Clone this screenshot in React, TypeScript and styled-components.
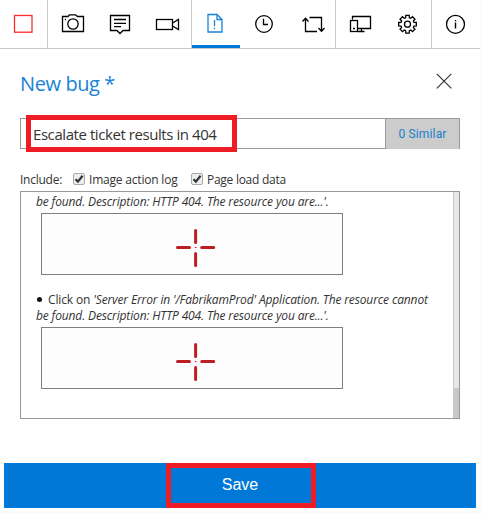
import React from 'react';
import styled, { createGlobalStyle } from 'styled-components';

const GlobalStyle = createGlobalStyle`
  *, *::before, *::after { box-sizing: border-box; }
  body { margin: 0; background: #fafafa; font-family: 'Open Sans', 'Noto Sans', sans-serif; color: #333; }
`;

const Panel = styled.main`
  display: flex;
  flex-direction: column;
  width: 480px;
  height: 511px;
  background: #fff;
`;

const Toolbar = styled.nav`
  display: flex;
  height: 49px;
  border-bottom: 1px solid #c8c8c8;
`;

const Tool = styled.button<{ $divided?: boolean; $active?: boolean }>`
  width: 48px;
  height: 48px;
  padding: 0;
  border: 0;
  background: ${p => (p.$active ? 'linear-gradient(#0078d7, #0078d7) 0 45px / 48px 3px no-repeat' : 'none')};
  box-shadow: ${p => (p.$divided ? 'inset -1px 0 #c8c8c8' : 'none')};
  svg { display: block; }
`;

const Header = styled.header`
  display: flex;
  justify-content: space-between;
  height: 69px;
  padding: 21px 26px 0 20px;
`;

const Title = styled.h1`
  margin: 0;
  font-size: 20px;
  font-weight: 400;
  line-height: 28px;
  letter-spacing: -0.4px;
  color: #1883d7;
`;

const Close = styled.button`
  width: 20px;
  height: 20px;
  margin-top: 1px;
  padding: 0;
  border: 0;
  background: none;
  svg { display: block; }
`;

const TitleField = styled.div`
  position: relative;
  display: flex;
  width: 440px;
  height: 31px;
  margin-left: 20px;
  border: 1px solid #999;
`;

const FieldText = styled.div`
  flex: 1;
  padding-left: 12px;
  font-size: 15px;
  line-height: 30px;
  letter-spacing: -0.43px;
`;

const Similar = styled.button`
  width: 74px;
  height: 30px;
  padding: 0;
  border: 0;
  border-left: 1px solid #999;
  background: #ccc;
  color: #1480cd;
  font: 12px/28px Roboto, sans-serif;
  letter-spacing: 0.15px;
`;

const Highlight = styled.div<{ $x: number; $y: number; $w: number; $h: number }>`
  position: absolute;
  left: ${p => p.$x}px;
  top: ${p => p.$y}px;
  width: ${p => p.$w}px;
  height: ${p => p.$h}px;
  border: 5px solid #ee1c25;
  pointer-events: none;
`;

const Options = styled.div`
  display: flex;
  height: 42px;
  padding: 22px 0 0 20px;
  font-size: 12px;
  line-height: 18px;
`;

const OptionsLabel = styled.span`
  width: 53px;
  letter-spacing: -0.25px;
`;

const Option = styled.label<{ $w: number; $spacing: number }>`
  display: flex;
  width: ${p => p.$w}px;
  gap: 4px;
  letter-spacing: ${p => p.$spacing}px;
  white-space: nowrap;
  svg { flex: none; margin-top: 2px; }
`;

const Log = styled.section`
  display: flex;
  width: 440px;
  height: 228px;
  margin-left: 20px;
  border: 1px solid #999;
`;

const Entries = styled.div`
  flex: 1;
  padding: 2px 0 0 15px;
  font-size: 12px;
  line-height: 16px;
  white-space: nowrap;
`;

const Line = styled.div<{ $spacing: number }>`
  height: 16px;
  letter-spacing: ${p => p.$spacing}px;
`;

const Bullet = styled.span`
  display: inline-block;
  width: 5px;
  height: 5px;
  margin: 0 6px 2px 1px;
  border-radius: 50%;
  background: #111;
`;

const Shot = styled.div`
  width: 302px;
  height: 62px;
  margin: 3px 0 17px 5px;
  border: 1px solid #808080;
  background: #fdfdfd;
  svg { display: block; }
`;

const ScrollTrack = styled.div`
  display: flex;
  align-items: flex-end;
  width: 6px;
  background: linear-gradient(90deg, #c8c8c8 1px, #e8e8e8 1px);
`;

const ScrollThumb = styled.div`
  width: 6px;
  height: 30px;
  background: #c8c8c8;
`;

const SaveButton = styled.button`
  position: relative;
  width: 472px;
  height: 45px;
  margin: 44px 0 0 4px;
  padding: 0 0 2px;
  border: 0;
  background: #0078d7;
  color: #fff;
  font: 16px/43px 'Liberation Sans', Arial, sans-serif;
`;

const gearPath = Array.from({ length: 8 }, (_, i) => {
  const point = (radius: number, degrees: number) => {
    const angle = ((i * 45 + degrees) * Math.PI) / 180;
    return `${(23.5 + radius * Math.cos(angle)).toFixed(2)} ${(24.2 + radius * Math.sin(angle)).toFixed(2)}`;
  };
  return `${i ? 'L' : 'M'}${point(9, -11)}L${point(9, 11)}L${point(6.7, 16)}L${point(6.7, 29)}`;
}).join('') + 'Z';

type ToolItem = { name: string; color?: string; divided?: boolean; active?: boolean; art: React.ReactNode };

const tools: ToolItem[] = [
  { name: 'Stop', color: '#ff2a2a', divided: true, art: <rect x="14.5" y="15.5" width="17.5" height="16.7" /> },
  {
    name: 'Screenshot',
    art: <><path d="M14.5 16.5H20L21.5 14.8H27.5L29.5 16.5H35.5V31.5H14.5Z" /><circle cx="25" cy="24" r="5.2" /><path d="M17 19.5h1" /></>,
  },
  {
    name: 'Note',
    art: <><path d="M14.5 15.5H33.5V30.5H27L24 33.5L21 30.5H14.5Z" /><path d="M18 19.5H30M18 23.3H30M18 26.7H25" /></>,
  },
  { name: 'Record', divided: true, art: <><rect x="12.5" y="19.5" width="16" height="10" /><path d="M28.5 23L34.5 19.5V29.5L28.5 26" /></> },
  {
    name: 'Bug', color: '#1683da', active: true,
    art: <><path d="M16 14.5H25L30 19.5V32H16Z" /><path d="M25 14.5V19.5H30" /><path d="M22.5 20v6.2M22.5 27.8v1.5" /></>,
  },
  { name: 'Timeline', art: <><circle cx="24" cy="24" r="8.3" /><path d="M23.5 18.8V24.5H28" /></> },
  { name: 'Test', divided: true, art: <><path d="M29 31.5H17.5V18.5M14.5 21.5L17.5 18.3L20.5 21.5M21.5 17.5H33.5V30.5M30.5 28L33.5 31.2L36.5 28" /></> },
  {
    name: 'Devices',
    art: <><path d="M16.5 19.5V16.5H34.5V28.5H22" /><rect x="14.5" y="20.5" width="7" height="11" /><path d="M17 28.5h2M22 31.5H28.5M25.5 28.5V31.5" /></>,
  },
  { name: 'Settings', divided: true, art: <><path d={gearPath} /><circle cx="23.5" cy="24.2" r="3" /></> },
  { name: 'About', art: <><circle cx="23.5" cy="24.3" r="9" /><path d="M23.5 22.5V28.5M23.5 20v1.2" strokeWidth="1.4" /></> },
];

const Check = () => (
  <svg width="12" height="12" viewBox="0 0 12 12">
    <rect x=".5" y=".5" width="11" height="11" rx="1.5" fill="#eee" stroke="#aaa" />
    <path d="M2.5 6.2L4.9 8.6L9.6 2.8" fill="none" stroke="#333" strokeWidth="2.2" />
  </svg>
);

const Screenshot = () => (
  <Shot>
    <svg width="300" height="60" viewBox="0 0 300 60" fill="none" stroke="#be1e22" strokeWidth="3" strokeLinecap="round">
      <path d="M153.6 16.5V28.5M153.6 39.5V51.5M135.5 33.5H147.5M159.7 33.5H171.7" />
      <path d="M153.2 33.5h.8" strokeWidth="1" />
    </svg>
  </Shot>
);

export default function App() {
  return (
    <>
      <GlobalStyle />
      <Panel>
        <Toolbar>
          {tools.map(t => (
            <Tool key={t.name} aria-label={t.name} $divided={t.divided} $active={t.active}>
              <svg width="48" height="48" viewBox="0 0 48 48" fill="none" stroke={t.color ?? '#000'} strokeWidth="1.3">{t.art}</svg>
            </Tool>
          ))}
        </Toolbar>
        <Header>
          <Title>New bug *</Title>
          <Close aria-label="Close">
            <svg width="20" height="20" viewBox="0 0 20 20" stroke="#333" strokeWidth="1.2"><path d="M2.8 2.8L17.3 17.3M17.3 2.8L2.8 17.3" /></svg>
          </Close>
        </Header>
        <TitleField>
          <FieldText>Escalate ticket results in 404</FieldText>
          <Similar>0 Similar</Similar>
          <Highlight $x={5} $y={-4} $w={211} $h={37} />
        </TitleField>
        <Options>
          <OptionsLabel>Include:</OptionsLabel>
          <Option $w={118} $spacing={-0.2}><Check />Image action log</Option>
          <Option $w={110} $spacing={-0.27}><Check />Page load data</Option>
        </Options>
        <Log>
          <Entries>
            <Line $spacing={-0.14}><i>be found. Description: HTTP 404. The resource you are...'.</i></Line>
            <Screenshot />
            <Line $spacing={-0.135}><Bullet />Click on <i>'Server Error in '/FabrikamProd' Application. The resource cannot</i></Line>
            <Line $spacing={-0.14}><i>be found. Description: HTTP 404. The resource you are...'.</i></Line>
            <Screenshot />
          </Entries>
          <ScrollTrack><ScrollThumb /></ScrollTrack>
        </Log>
        <SaveButton>
          Save
          <Highlight $x={162} $y={0} $w={150} $h={45} />
        </SaveButton>
      </Panel>
    </>
  );
}
